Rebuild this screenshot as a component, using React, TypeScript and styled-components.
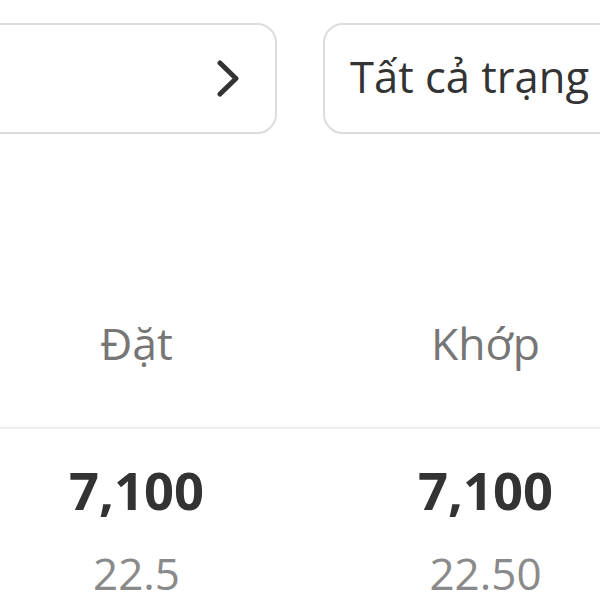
import React from "react";
import styled, { createGlobalStyle } from "styled-components";

const GlobalStyle = createGlobalStyle`
  html, body {
    margin: 0;
    padding: 0;
    background: #ffffff;
    overflow: hidden;
  }
  body {
    font-family: "Open Sans", "Noto Sans", sans-serif;
    width: 600px;
    height: 600px;
  }
`;

const Page = styled.div`
  width: 600px;
  height: 600px;
  overflow: hidden;
  background: #ffffff;
  padding-top: 23px;
  box-sizing: border-box;
`;

const FilterRow = styled.div`
  display: flex;
  gap: 46px;
  margin-left: -43px;
  width: 700px;
`;

const FilterBox = styled.div`
  box-sizing: border-box;
  width: 320px;
  height: 111px;
  border: 2px solid #dcdcdc;
  border-radius: 20px;
  background: #ffffff;
  display: flex;
  align-items: center;
  justify-content: ${(p: { $align: "start" | "end" }) =>
    p.$align === "end" ? "flex-end" : "flex-start"};
  padding: 0 36px 4px 25px;
`;

const FilterText = styled.span`
  font-size: 43.5px;
  line-height: 62px;
  color: #333333;
  white-space: nowrap;
`;

const Chevron = styled.svg`
  display: block;
  margin-top: 4px;
`;

const Table = styled.div`
  margin-left: -38px;
  width: 698px;
`;

const HeaderRow = styled.div`
  display: grid;
  grid-template-columns: 349px 349px;
  padding-top: 178px;
  padding-bottom: 53px;
`;

const HeaderCell = styled.div`
  text-align: center;
  font-size: 44.5px;
  line-height: 62px;
  color: #767676;
`;

const BodyRow = styled.div`
  display: grid;
  grid-template-columns: 349px 349px;
  border-top: 2px solid #eeeeee;
  box-shadow: 0 -1px 2px rgba(0, 0, 0, 0.03);
  padding-top: 24px;
`;

const BodyCell = styled.div`
  display: flex;
  flex-direction: column;
  align-items: center;
  gap: 15px;
`;

const MainValue = styled.div`
  font-size: 52.5px;
  line-height: 74px;
  font-weight: 700;
  color: #333333;
`;

const SubValue = styled.div`
  font-size: 44px;
  line-height: 62px;
  color: #8a8a8a;
`;

export default function App() {
  return (
    <>
      <GlobalStyle />
      <Page>
        <FilterRow>
          <FilterBox $align="end">
            <Chevron width="22" height="37" viewBox="0 0 22 37" fill="none">
              <path
                d="M3 3 L19 18.5 L3 34"
                stroke="#333333"
                strokeWidth="5"
                strokeLinecap="round"
                strokeLinejoin="round"
              />
            </Chevron>
          </FilterBox>
          <FilterBox $align="start">
            <FilterText>Tất cả trạng thái</FilterText>
          </FilterBox>
        </FilterRow>
        <Table>
          <HeaderRow>
            <HeaderCell>Đặt</HeaderCell>
            <HeaderCell>Khớp</HeaderCell>
          </HeaderRow>
          <BodyRow>
            <BodyCell>
              <MainValue>7,100</MainValue>
              <SubValue>22.5</SubValue>
            </BodyCell>
            <BodyCell>
              <MainValue>7,100</MainValue>
              <SubValue>22.50</SubValue>
            </BodyCell>
          </BodyRow>
        </Table>
      </Page>
    </>
  );
}
